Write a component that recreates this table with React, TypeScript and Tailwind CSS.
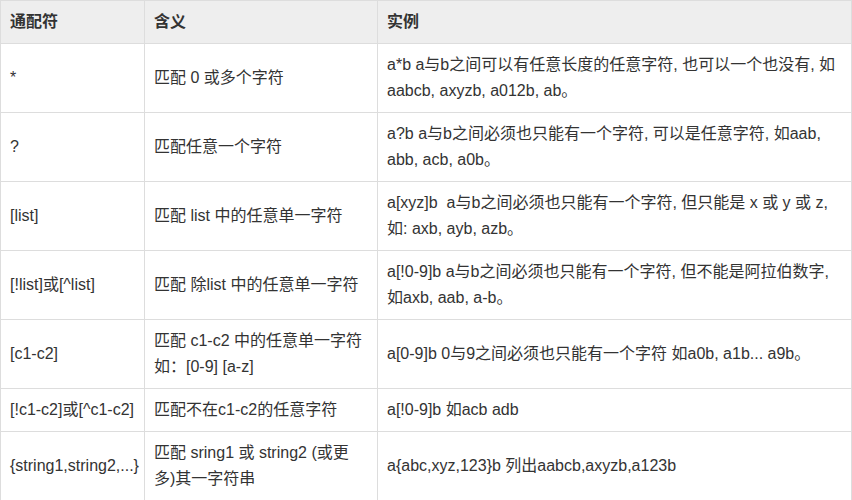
const rows: { pat: React.ReactNode; mean: React.ReactNode; ex: React.ReactNode }[] = [
  {
    pat: "*",
    mean: "匹配 0 或多个字符",
    ex: (
      <>
        a*b a与b之间可以有任意长度的任意字符, 也可以一个也没有, 如
        <br />
        aabcb, axyzb, a012b, ab。
      </>
    ),
  },
  {
    pat: "?",
    mean: "匹配任意一个字符",
    ex: (
      <>
        a?b a与b之间必须也只能有一个字符, 可以是任意字符, 如aab,
        <br />
        abb, acb, a0b。
      </>
    ),
  },
  {
    pat: "[list]",
    mean: "匹配 list 中的任意单一字符",
    ex: (
      <>
        a[xyz]b&nbsp; a与b之间必须也只能有一个字符, 但只能是 x 或 y 或 z,
        <br />
        如: axb, ayb, azb。
      </>
    ),
  },
  {
    pat: "[!list]或[^list]",
    mean: "匹配 除list 中的任意单一字符",
    ex: (
      <>
        a[!0-9]b a与b之间必须也只能有一个字符, 但不能是阿拉伯数字,
        <br />
        如axb, aab, a-b。
      </>
    ),
  },
  {
    pat: "[c1-c2]",
    mean: (
      <>
        匹配 c1-c2 中的任意单一字符
        <br />
        如：[0-9] [a-z]
      </>
    ),
    ex: "a[0-9]b 0与9之间必须也只能有一个字符 如a0b, a1b... a9b。",
  },
  {
    pat: "[!c1-c2]或[^c1-c2]",
    mean: "匹配不在c1-c2的任意字符",
    ex: "a[!0-9]b 如acb adb",
  },
  {
    pat: "{string1,string2,...}",
    mean: (
      <>
        匹配 sring1 或 string2 (或更
        <br />
        多)其一字符串
      </>
    ),
    ex: "a{abc,xyz,123}b 列出aabcb,axyzb,a123b",
  },
];

const cell = "border border-[#dddddd] px-[9px] py-2 align-middle whitespace-nowrap";

export default function App() {
  return (
    <div className="w-[852px] h-[500px] overflow-hidden bg-white">
      <table
        className="w-[851px] table-fixed border-collapse text-[16px] leading-[26px] text-[#333333]"
        style={{ fontFamily: '"Liberation Sans", Arial, "Noto Sans CJK SC", sans-serif' }}
      >
        <colgroup>
          <col className="w-[144px]" />
          <col className="w-[233px]" />
          <col className="w-[474px]" />
        </colgroup>
        <thead>
          <tr className="bg-[#eeeeee]">
            <th className={cell + " text-left font-bold"}>通配符</th>
            <th className={cell + " text-left font-bold"}>含义</th>
            <th className={cell + " text-left font-bold"}>实例</th>
          </tr>
        </thead>
        <tbody>
          {rows.map((r, i) => (
            <tr key={i}>
              <td className={cell}>{r.pat}</td>
              <td className={cell}>{r.mean}</td>
              <td className={cell}>{r.ex}</td>
            </tr>
          ))}
        </tbody>
      </table>
    </div>
  );
}
